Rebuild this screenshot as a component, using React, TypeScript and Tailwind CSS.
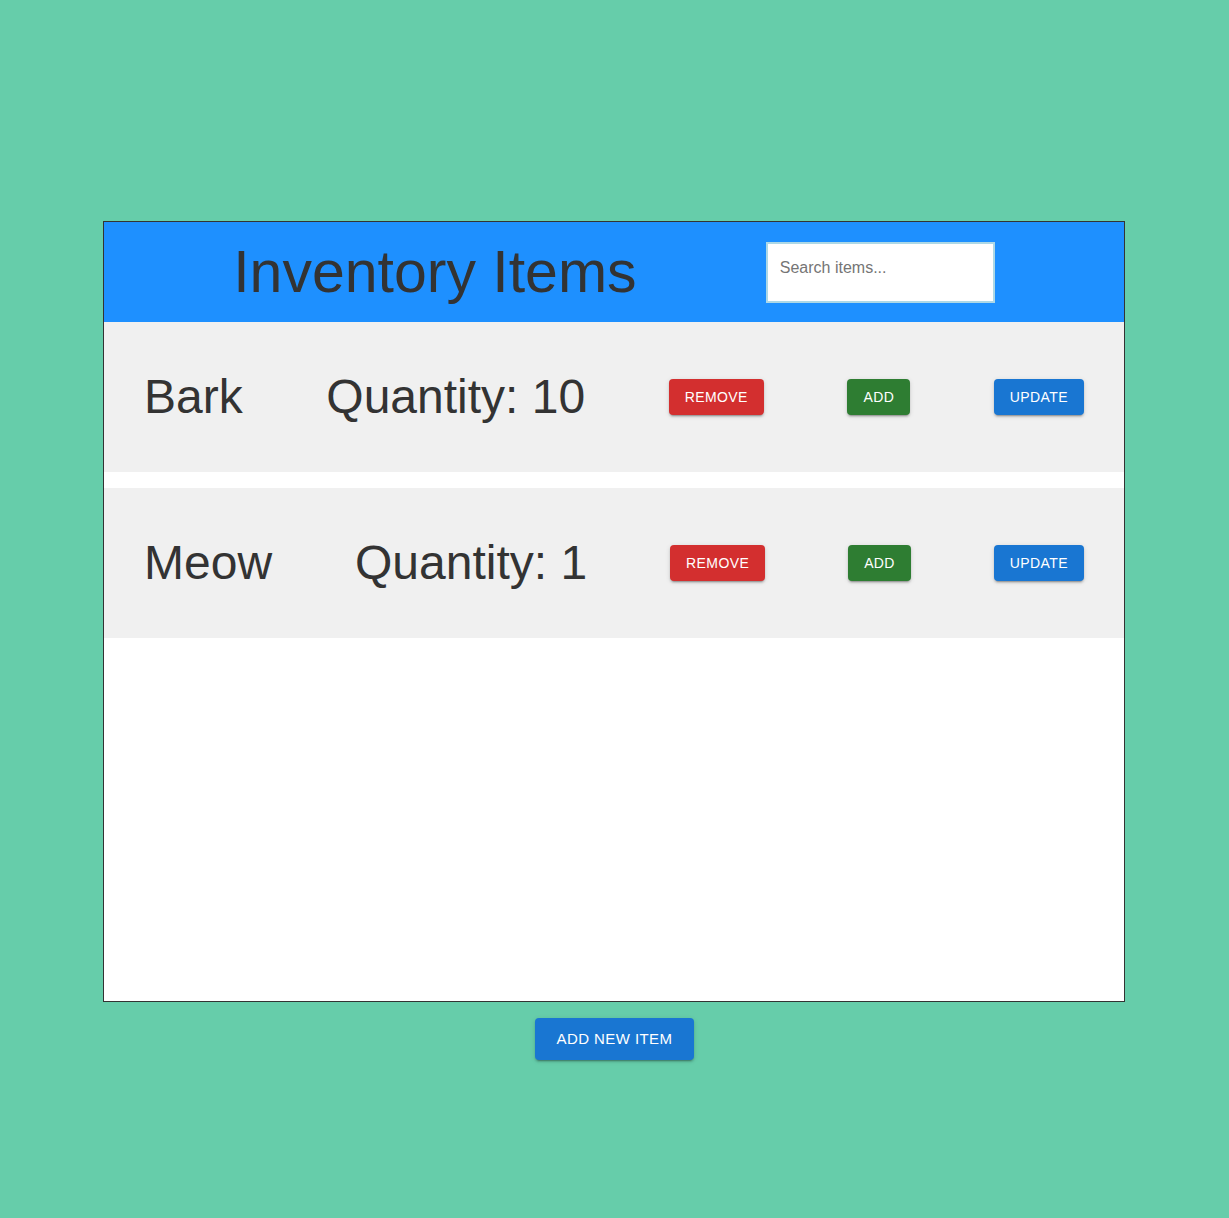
const btnBase =
  "rounded-[4px] px-4 py-[6px] text-[14px] leading-[1.75] tracking-[0.02857em] uppercase font-medium text-white shadow-[0px_3px_1px_-2px_rgba(0,0,0,0.2),0px_2px_2px_0px_rgba(0,0,0,0.14),0px_1px_5px_0px_rgba(0,0,0,0.12)]";

type Item = { name: string; quantity: number };

const items: Item[] = [
  { name: "Bark", quantity: 10 },
  { name: "Meow", quantity: 1 },
];

function ItemRow({ item }: { item: Item }) {
  return (
    <div className="flex h-[150px] items-center justify-between bg-[#f0f0f0] px-10 text-[#333]">
      <h3 className="text-[48px] leading-[1.167]">{item.name}</h3>
      <h3 className="text-[48px] leading-[1.167]">Quantity: {item.quantity}</h3>
      <button className={`${btnBase} bg-[#d32f2f]`}>Remove</button>
      <button className={`${btnBase} bg-[#2e7d32]`}>Add</button>
      <button className={`${btnBase} bg-[#1976d2]`}>Update</button>
    </div>
  );
}

export default function App() {
  return (
    <div className="flex min-h-[1218px] flex-col items-center bg-[#66cdaa] pt-[221px] font-['Liberation_Sans',Arial,sans-serif]">
      {/* main box */}
      <div className="mr-px h-[781px] w-[1022px] border border-[#333] bg-white">
        {/* header */}
        <div className="flex h-[100px] items-center justify-evenly bg-[#1e90ff]">
          <h2 className="text-[59px] leading-[1.2] text-[#333]">Inventory Items</h2>
          <input
            type="text"
            placeholder="Search items..."
            className="h-[61px] w-[229px] border-2 border-[#add8e6] bg-white pb-2 pl-3 text-[16px] text-[#333] outline-none placeholder:text-[#757575]"
          />
        </div>

        {/* list */}
        <div className="flex flex-col gap-4">
          {items.map((item) => (
            <ItemRow key={item.name} item={item} />
          ))}
        </div>
      </div>

      <button
        className={`mt-4 rounded-[4px] bg-[#1976d2] px-[22px] py-2 text-[15px] leading-[1.75] tracking-[0.02857em] uppercase font-medium text-white shadow-[0px_3px_1px_-2px_rgba(0,0,0,0.2),0px_2px_2px_0px_rgba(0,0,0,0.14),0px_1px_5px_0px_rgba(0,0,0,0.12)]`}
      >
        Add New Item
      </button>
    </div>
  );
}
